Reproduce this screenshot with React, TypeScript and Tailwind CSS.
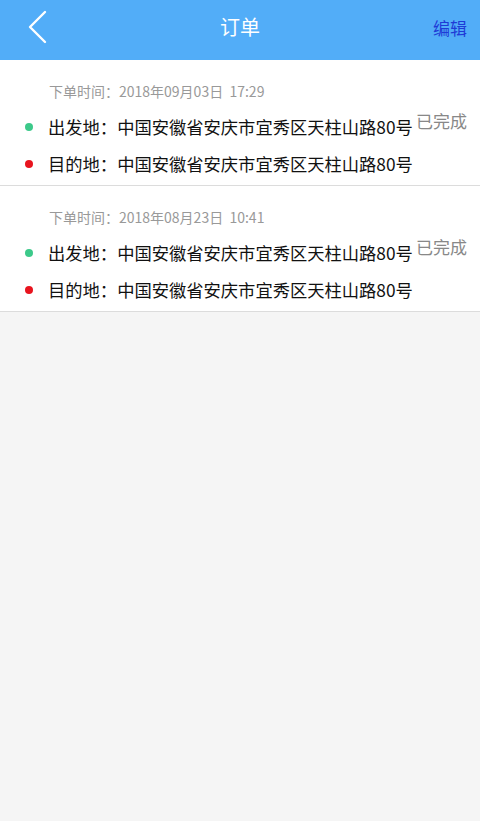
const orders = [
  { time: "2018年09月03日  17:29", from: "中国安徽省安庆市宜秀区天柱山路80号", to: "中国安徽省安庆市宜秀区天柱山路80号", status: "已完成" },
  { time: "2018年08月23日  10:41", from: "中国安徽省安庆市宜秀区天柱山路80号", to: "中国安徽省安庆市宜秀区天柱山路80号", status: "已完成" },
];

const font = { fontFamily: '"Noto Sans CJK SC", "Noto Sans", sans-serif' };

export default function App() {
  return (
    <div className="min-h-[821px] bg-[#f5f5f5] flex flex-col" style={font}>
      <header className="h-[60px] bg-[#52adf8] grid grid-cols-3 items-center">
        <button className="h-[60px] flex items-center pl-[27px] -mt-[6px]">
          <svg width="22" height="34" viewBox="0 0 22 34" fill="none">
            <path d="M18 2 L3 17 L18 32" stroke="#fff" strokeWidth="2.4" strokeLinecap="round" strokeLinejoin="round" />
          </svg>
        </button>
        <h1 className="text-[20px] leading-none text-white text-center -mt-[6px]">订单</h1>
        <button className="pr-[13px] text-right text-[17px] leading-none text-[#1f3bd6] -mt-[6px]">编辑</button>
      </header>

      {orders.map((o, i) => (
        <div key={i} className="bg-white border-b border-[#dcdcdc] pt-[20px] pb-[3px]">
          <div className="h-[22px] flex items-center pl-[49px] text-[14px] text-[#999] whitespace-pre">
            下单时间：{o.time}
          </div>
          <div className="mt-[7px] h-[36px] flex items-center justify-between pl-[25px] pr-[13px]">
            <div className="flex items-center gap-[15px]">
              <span className="w-[8px] h-[8px] rounded-full bg-[#3cc98a]" />
              <span className="text-[17.3px] text-[#111] whitespace-nowrap">出发地：{o.from}</span>
            </div>
            <span className="text-[17px] text-[#888] mb-[12px]">{o.status}</span>
          </div>
          <div className="h-[37px] flex items-center pl-[25px]">
            <div className="flex items-center gap-[15px]">
              <span className="w-[8px] h-[8px] rounded-full bg-[#e8141e]" />
              <span className="text-[17.3px] text-[#111] whitespace-nowrap">目的地：{o.to}</span>
            </div>
          </div>
        </div>
      ))}
    </div>
  );
}
